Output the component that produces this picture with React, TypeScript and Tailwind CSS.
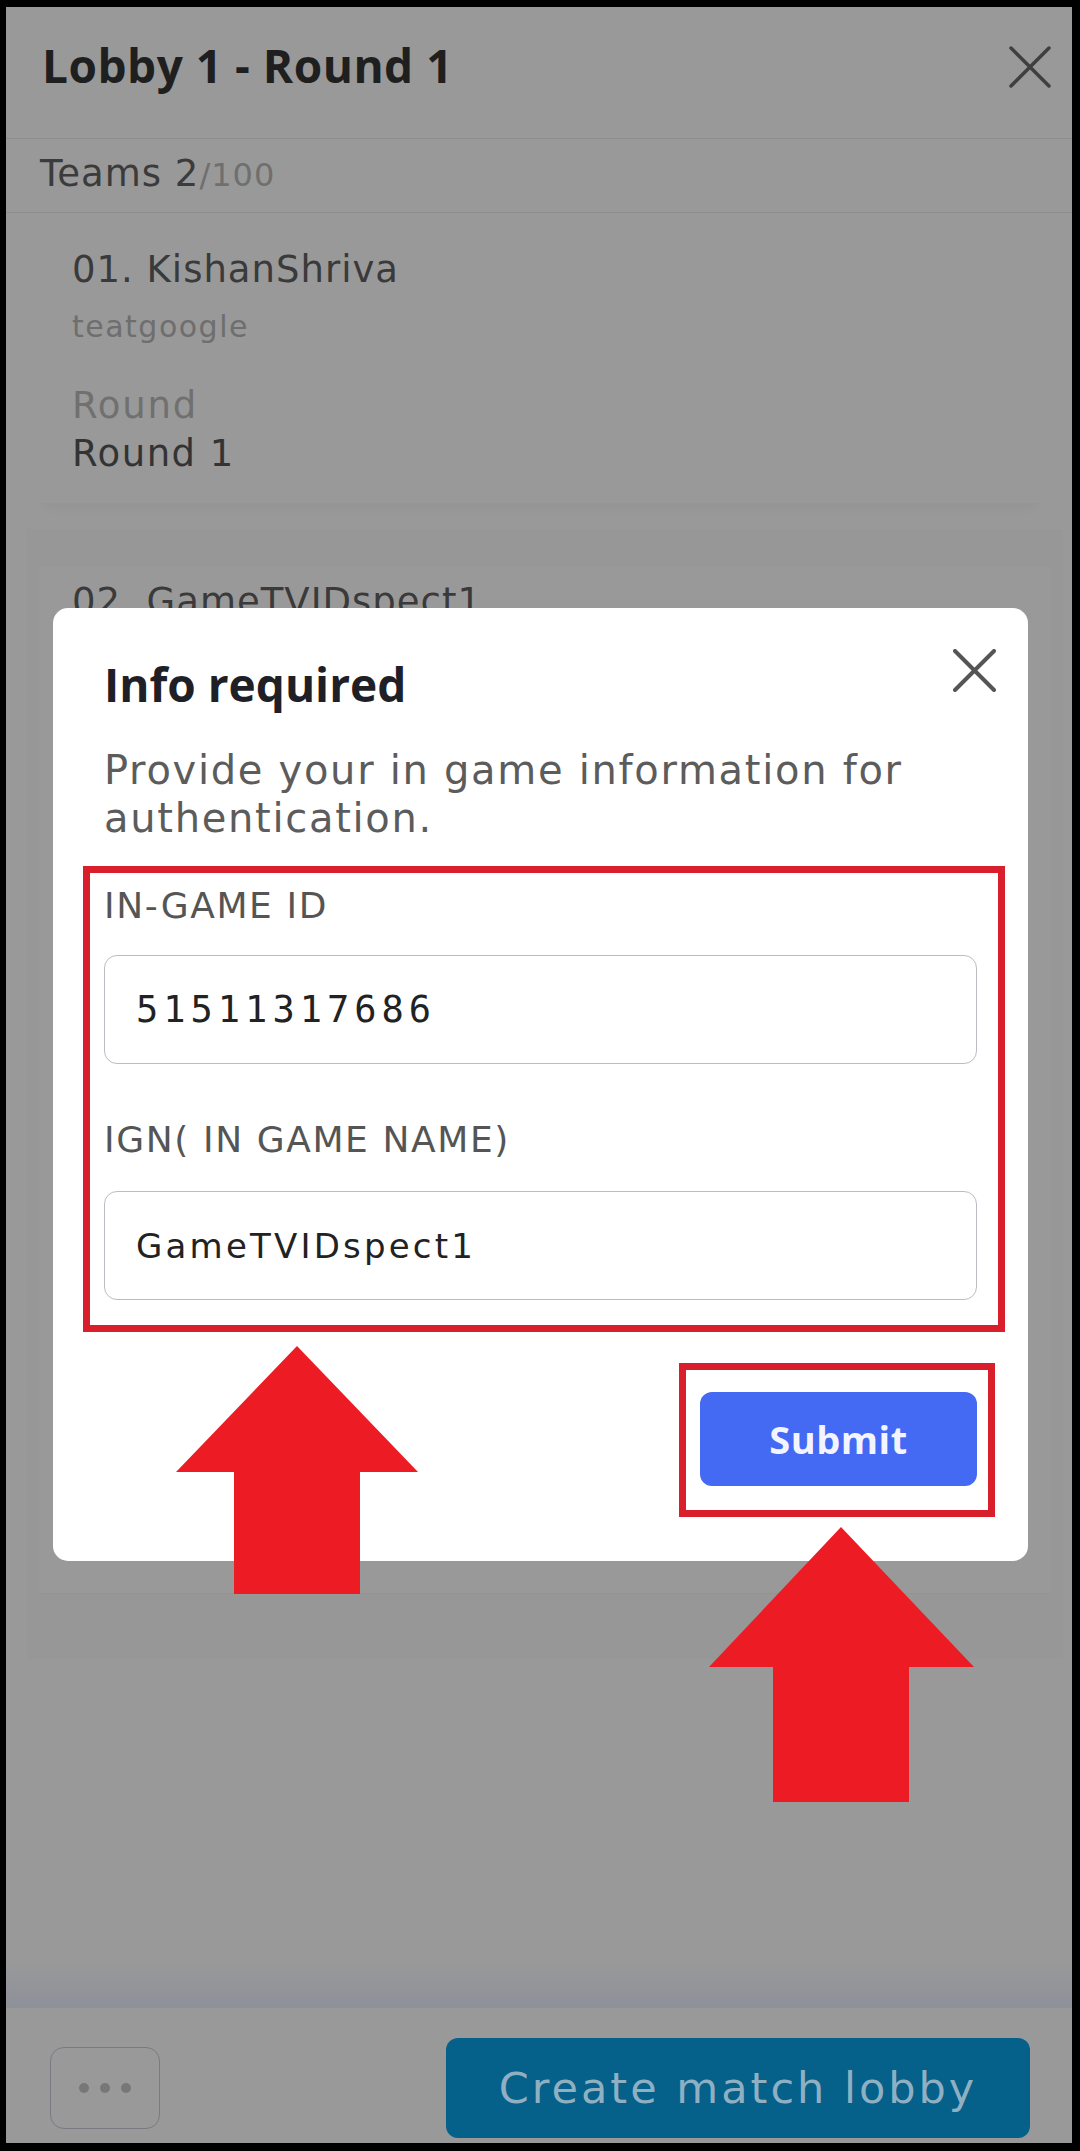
const sans = "font-['DejaVu_Sans',sans-serif]";
const bold = "font-['Open_Sans',sans-serif] font-bold";

const CloseIcon = ({ size, color, stroke }: { size: number; color: string; stroke: number }) => (
  <svg width={size} height={size} viewBox={`0 0 ${size} ${size}`} fill="none">
    <path
      d={`M2 2 L${size - 2} ${size - 2} M${size - 2} 2 L2 ${size - 2}`}
      stroke={color}
      strokeWidth={stroke}
      strokeLinecap="round"
    />
  </svg>
);

const TeamCard = () => (
  <div className="ml-[33px] mr-[31px] flex flex-col border-b border-[#959595] px-[33px] pt-[38px] pb-[31px] shadow-[0_10px_10px_-6px_rgba(0,0,0,0.04)]">
    <div className={`${sans} text-[37px] leading-[37px] tracking-[1px] text-[#3a3a3a]`}>01. KishanShriva</div>
    <div className={`${sans} mt-[24px] text-[30px] leading-[30px] tracking-[1.5px] text-[#6e6e6e]`}>teatgoogle</div>
    <div className={`${sans} mt-[45px] text-[37px] leading-[37px] tracking-[1.8px] text-[#707070]`}>Round</div>
    <div className={`${sans} mt-[11px] text-[37px] leading-[37px] tracking-[1.5px] text-[#333333]`}>Round 1</div>
  </div>
);

const InfoModal = () => (
  <div className="absolute left-[47px] top-[601px] flex w-[975px] flex-col rounded-[15px] bg-white px-[51px] pt-[53px] pb-[44px]">
    <div className="flex items-start justify-between">
      <h2 className={`${bold} text-[46px] leading-[46px] text-[#1f1f28]`}>Info required</h2>
      <div className="-mt-[12px] -mr-[19px]">
        <CloseIcon size={43} color="#555555" stroke={4} />
      </div>
    </div>
    <p className={`${sans} mt-[39px] text-[40px] leading-[48px] tracking-[1.7px] text-[#5c5c5c]`}>
      Provide your in game information for authentication.
    </p>

    <div className="mt-[24px] -ml-[21px] -mr-[28px] flex flex-col border-[7px] border-[#da1f2c] pt-[15px] pl-[14px] pr-[21px] pb-[25px]">
      <label className={`${sans} text-[36px] leading-[36px] tracking-[1.6px] text-[#555555]`}>IN-GAME ID</label>
      <input
        readOnly
        value="51511317686"
        className="mt-[31px] h-[109px] w-full rounded-[13px] border-[1.5px] border-[#bcbcc2] bg-white pl-[31px] font-['DejaVu_Sans_Mono',monospace] text-[37px] tracking-[5px] text-[#222222] outline-none"
      />
      <label className={`${sans} mt-[58px] text-[36px] leading-[36px] tracking-[1.6px] text-[#555555]`}>
        IGN( IN GAME NAME)
      </label>
      <input
        readOnly
        value="GameTVIDspect1"
        className={`${sans} mt-[33px] h-[109px] w-full rounded-[13px] border-[1.5px] border-[#bcbcc2] bg-white pl-[31px] text-[34px] tracking-[3.2px] text-[#222222] outline-none`}
      />
    </div>

    <div className="mt-[31px] -mr-[18px] self-end border-[7px] border-[#da1f2c] pt-[22px] pl-[14px] pr-[11px] pb-[24px]">
      <button className="flex h-[94px] w-[277px] items-center justify-center rounded-[12px] bg-[#4469f2] font-['Open_Sans',sans-serif] text-[38px] font-bold tracking-[0.5px] text-[#f2f5ff]">
        Submit
      </button>
    </div>
  </div>
);

const Arrows = () => (
  <svg
    className="pointer-events-none absolute -left-[6px] -top-[7px]"
    width={1080}
    height={2151}
    viewBox="0 0 1080 2151"
  >
    <polygon points="297,1346 418,1472 360,1472 360,1594 234,1594 234,1472 176,1472" fill="#ed1c24" />
    <polygon points="841,1527 974,1667 909,1667 909,1802 773,1802 773,1667 709,1667" fill="#ed1c24" />
  </svg>
);

export default function App() {
  return (
    <div className="relative flex h-[2151px] w-[1080px] flex-col border-t-[7px] border-l-[6px] border-r-[8px] border-b-[8px] border-black bg-[#999999]">
      <div className="flex h-[132px] shrink-0 items-center justify-between border-b border-[#8e8e8e] pl-[36px] pr-[21px] pb-[16px]">
        <h1 className={`${bold} text-[46px] leading-[46px] tracking-[0.5px] text-[#1f1f1f]`}>Lobby 1 - Round 1</h1>
        <div className="mt-[5px]">
          <CloseIcon size={42} color="#3f3f3f" stroke={3.5} />
        </div>
      </div>

      <div className="flex h-[74px] shrink-0 items-center border-b border-[#8e8e8e] pl-[34px] pb-[4px]">
        <span className={`${sans} text-[37px] leading-none tracking-[1px] text-[#3b3b3b]`}>
          Teams 2<span className="text-[32px] text-[#6f6f6f]">/100</span>
        </span>
      </div>

      <TeamCard />

      <div className="mt-[25px] ml-[21px] mr-[9px] shrink-0 bg-[#979797] pt-[38px] px-[12px] pb-[65px]">
        <div className="h-[1027px] border-b border-[#939393] bg-[#999999] px-[33px] pt-[16px]">
          <div className={`${sans} text-[37px] leading-[37px] tracking-[1px] text-[#3a3a3a]`}>02. GameTVIDspect1</div>
        </div>
      </div>

      <div className="flex-1" />
      <div className="h-[48px] shrink-0 bg-linear-to-b from-[#999999] to-[#8e9199]" />

      <div className="flex h-[135px] shrink-0 items-center justify-between pl-[44px] pr-[42px] pt-[30px] pb-[5px]">
        <button className="flex h-[82px] w-[110px] items-center justify-center gap-[11px] rounded-[14px] border-[1.5px] border-[#7a7a82]">
          <span className="h-[10px] w-[10px] rounded-full bg-[#777777]" />
          <span className="h-[10px] w-[10px] rounded-full bg-[#777777]" />
          <span className="h-[10px] w-[10px] rounded-full bg-[#777777]" />
        </button>
        <button className={`${sans} flex h-[100px] w-[584px] items-center justify-center rounded-[12px] bg-[#05608a] text-[43px] tracking-[3px] text-[#8fb0c2]`}>
          Create match lobby
        </button>
      </div>

      <InfoModal />
      <Arrows />
    </div>
  );
}
